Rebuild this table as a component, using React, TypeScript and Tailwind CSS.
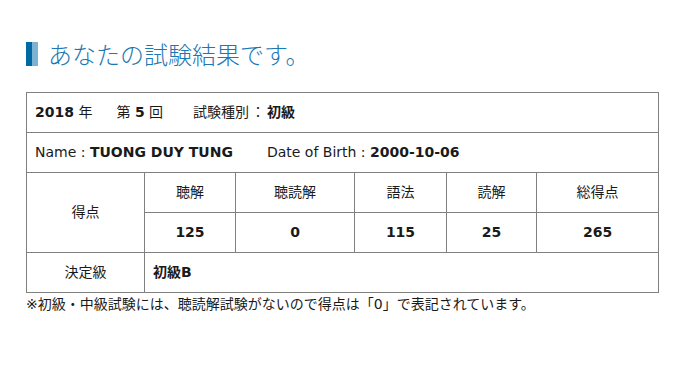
export default function App() {
  const scores = [
    { label: '聴解', value: '125' },
    { label: '聴読解', value: '0' },
    { label: '語法', value: '115' },
    { label: '読解', value: '25' },
    { label: '総得点', value: '265' },
  ]

  const cell = 'border border-[#808080] h-10 px-2'

  return (
    <div className="w-[673px] h-[368px] bg-white text-[14px] text-[#1a1a1a] font-['DejaVu_Sans','Noto_Sans_CJK_JP',sans-serif]">
      <div className="pl-[26px] pr-[15px] pt-[38px]">
        {/* Heading */}
        <div className="flex items-center h-[32px]">
          <div className="flex h-[24px]">
            <div className="w-[6px] bg-[#0068a3]" />
            <div className="w-[6px] bg-[#7cb2d2]" />
          </div>
          <h1 className="ml-[10px] text-[24px] leading-none text-[#1b78b4] font-['Noto_Sans_CJK_JP',sans-serif] font-light">
            あなたの試験結果です。
          </h1>
        </div>

        {/* Result table */}
        <table className="mt-[22px] w-[632px] border-collapse table-fixed">
          <colgroup>
            <col className="w-[118px]" />
            <col className="w-[91px]" />
            <col className="w-[119px]" />
            <col className="w-[92px]" />
            <col className="w-[90px]" />
            <col className="w-[122px]" />
          </colgroup>
          <tbody>
            <tr>
              <td colSpan={6} className={cell}>
                <span className="font-bold">2018</span> 年
                <span className="inline-block w-[24px]" />第 <span className="font-bold">5</span> 回
                <span className="inline-block w-[30px]" />試験種別<span className="mx-[2px]">：</span><span className="font-bold">初級</span>
              </td>
            </tr>
            <tr>
              <td colSpan={6} className={cell}>
                Name : <span className="font-bold">TUONG DUY TUNG</span>
                <span className="inline-block w-[34px]" />Date of Birth : <span className="font-bold">2000-10-06</span>
              </td>
            </tr>
            <tr>
              <td rowSpan={2} className={`${cell} text-center`}>得点</td>
              {scores.map((s) => (
                <td key={s.label} className={`${cell} text-center`}>{s.label}</td>
              ))}
            </tr>
            <tr>
              {scores.map((s) => (
                <td key={s.label} className={`${cell} text-center font-bold`}>{s.value}</td>
              ))}
            </tr>
            <tr>
              <td className={`${cell} text-center`}>決定級</td>
              <td colSpan={5} className={`${cell} font-bold`}>初級B</td>
            </tr>
          </tbody>
        </table>

        <p className="mt-[1px] leading-[20px]">
          ※初級・中級試験には、聴読解試験がないので得点は「0」で表記されています。
        </p>
      </div>
    </div>
  )
}
